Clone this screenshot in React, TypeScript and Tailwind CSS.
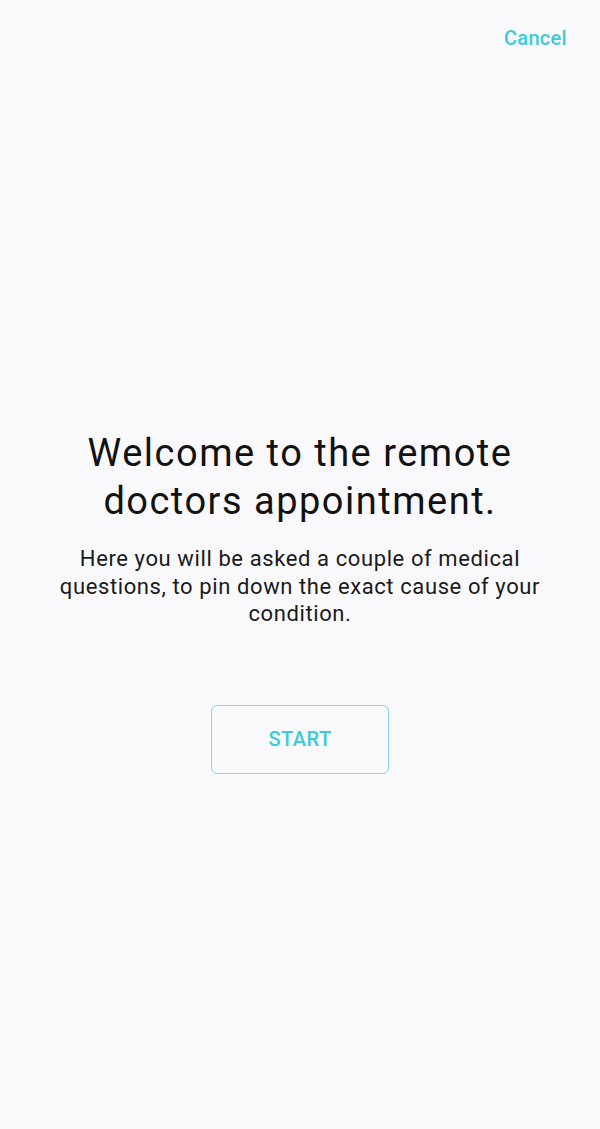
import React from 'react';

export default function App() {
  return (
    <div className="h-[1129px] w-full bg-[#f9f9fb] flex flex-col font-['Roboto',sans-serif]">
      {/* Top bar */}
      <div className="flex justify-end pt-[24px] pr-[33px]">
        <button className="text-[20px] font-medium tracking-[0.3px] text-[#3ccad8] leading-[28px]">Cancel</button>
      </div>

      {/* Welcome */}
      <div className="flex flex-col items-center pt-[377px] px-4 text-center">
        <h1 className="text-[38px] leading-[48px] tracking-[1.5px] text-[#111]">
          Welcome to the remote
          <br />
          doctors appointment.
        </h1>
        <p className="mt-[20px] text-[22px] leading-[27.5px] tracking-[0.6px] text-[#1a1a1a] max-w-[500px]">
          Here you will be asked a couple of medical questions, to pin down the exact cause of your condition.
        </p>
        <button className="mt-[77px] w-[178px] h-[69px] rounded-[6px] border-[1.5px] border-[#7fd9e2] text-[20px] font-medium tracking-[0.5px] text-[#3ccad8]">
          START
        </button>
      </div>
    </div>
  );
}
